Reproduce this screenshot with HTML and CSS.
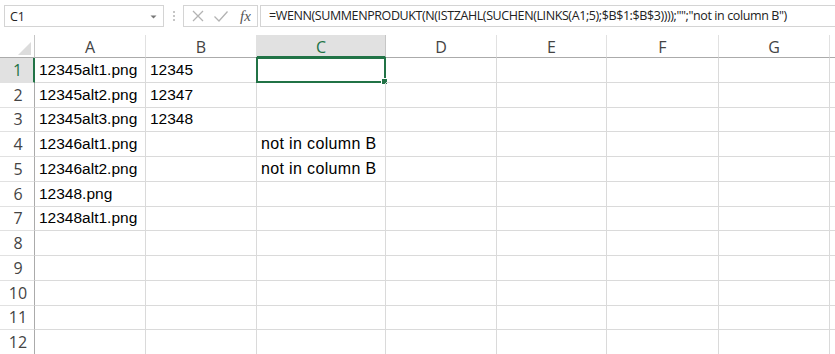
FILE: index.html
```html
<!DOCTYPE html>
<html>
<head>
<meta charset="utf-8">
<link rel="stylesheet" href="styles.css">
</head>
<body>
<div class="app">
  <div class="toolbar">
    <div class="namebox">
      <span class="name">C1</span>
      <svg class="drop" width="7" height="4" viewBox="0 0 7 4"><path d="M0.5 0.5 L6.5 0.5 L3.5 3.5 Z" fill="#777"/></svg>
    </div>
    <div class="grip"><span></span><span></span><span></span></div>
    <div class="fxbox">
      <svg width="14" height="14" viewBox="0 0 14 14"><path d="M2 2 L12 12 M12 2 L2 12" stroke="#b3b3b3" stroke-width="1.3" fill="none"/></svg>
      <svg width="16" height="14" viewBox="0 0 16 14"><path d="M1.5 7.5 L6 12 L14.5 2.5" stroke="#b3b3b3" stroke-width="1.3" fill="none"/></svg>
      <span class="fx">fx</span>
    </div>
    <div class="formula">=WENN(SUMMENPRODUKT(N(ISTZAHL(SUCHEN(LINKS(A1;5);$B$1:$B$3))));"";"not in column B")</div>
  </div>
  <div class="sheet">
    <div class="corner"><svg width="35" height="23" viewBox="0 0 35 23"><path d="M31 7 L31 20 L18 20 Z" fill="#dcdcdc"/></svg></div>
    <div class="ch">A</div>
    <div class="ch">B</div>
    <div class="ch sel">C</div>
    <div class="ch">D</div>
    <div class="ch">E</div>
    <div class="ch">F</div>
    <div class="ch">G</div>
    <div class="ch last"></div>

    <div class="rh sel">1</div><div class="c">12345alt1.png</div><div class="c">12345</div><div class="c active"><span class="handle"></span></div><div class="c"></div><div class="c"></div><div class="c"></div><div class="c"></div><div class="c last"></div>
    <div class="rh">2</div><div class="c">12345alt2.png</div><div class="c">12347</div><div class="c"></div><div class="c"></div><div class="c"></div><div class="c"></div><div class="c"></div><div class="c last"></div>
    <div class="rh">3</div><div class="c">12345alt3.png</div><div class="c">12348</div><div class="c"></div><div class="c"></div><div class="c"></div><div class="c"></div><div class="c"></div><div class="c last"></div>
    <div class="rh">4</div><div class="c">12346alt1.png</div><div class="c"></div><div class="c wide">not in column B</div><div class="c"></div><div class="c"></div><div class="c"></div><div class="c"></div><div class="c last"></div>
    <div class="rh">5</div><div class="c">12346alt2.png</div><div class="c"></div><div class="c wide">not in column B</div><div class="c"></div><div class="c"></div><div class="c"></div><div class="c"></div><div class="c last"></div>
    <div class="rh">6</div><div class="c">12348.png</div><div class="c"></div><div class="c"></div><div class="c"></div><div class="c"></div><div class="c"></div><div class="c"></div><div class="c last"></div>
    <div class="rh">7</div><div class="c">12348alt1.png</div><div class="c"></div><div class="c"></div><div class="c"></div><div class="c"></div><div class="c"></div><div class="c"></div><div class="c last"></div>
    <div class="rh">8</div><div class="c"></div><div class="c"></div><div class="c"></div><div class="c"></div><div class="c"></div><div class="c"></div><div class="c"></div><div class="c last"></div>
    <div class="rh">9</div><div class="c"></div><div class="c"></div><div class="c"></div><div class="c"></div><div class="c"></div><div class="c"></div><div class="c"></div><div class="c last"></div>
    <div class="rh">10</div><div class="c"></div><div class="c"></div><div class="c"></div><div class="c"></div><div class="c"></div><div class="c"></div><div class="c"></div><div class="c last"></div>
    <div class="rh">11</div><div class="c"></div><div class="c"></div><div class="c"></div><div class="c"></div><div class="c"></div><div class="c"></div><div class="c"></div><div class="c last"></div>
    <div class="rh">12</div><div class="c"></div><div class="c"></div><div class="c"></div><div class="c"></div><div class="c"></div><div class="c"></div><div class="c"></div><div class="c last"></div>
  </div>
</div>
</body>
</html>
```
FILE: styles.css
```css
* { box-sizing: border-box; }
html, body { margin: 0; padding: 0; background: #fff; overflow: hidden; }
.app { width: 835px; height: 354px; overflow: hidden; }

.toolbar {
  display: flex;
  align-items: center;
  height: 35px;
  padding: 5px 0 8px 4px;
  font-family: "Open Sans", sans-serif;
}
.namebox {
  width: 160px;
  height: 22px;
  border: 1px solid #d4d4d4;
  display: flex;
  align-items: center;
  justify-content: space-between;
  padding: 0 6px 0 5px;
  font-size: 12.5px;
  color: #222;
}
.drop { margin-top: 1px; }
.grip {
  width: 19px;
  display: flex;
  flex-direction: column;
  align-items: center;
  gap: 2px;
}
.grip span { width: 2px; height: 2px; background: #c6c6c6; }
.fxbox {
  width: 75px;
  height: 22px;
  border: 1px solid #d4d4d4;
  display: flex;
  align-items: center;
  gap: 8px;
  padding-left: 7px;
}
.fx {
  font-family: "Liberation Serif", serif;
  font-style: italic;
  font-size: 15px;
  color: #555;
  margin-left: 3px;
}
.formula {
  flex: 1;
  margin-left: 2px;
  height: 22px;
  border: 1px solid #d4d4d4;
  border-right: none;
  padding-left: 8px;
  font-size: 12.5px;
  letter-spacing: -0.4px;
  line-height: 20px;
  color: #222;
  white-space: nowrap;
  overflow: hidden;
}

.sheet {
  display: grid;
  grid-template-columns: 35px 111px 111px 129px 111px 110px 112px 111px 20px;
  grid-template-rows: 23px repeat(12, 24.75px);
}
.corner {
  border-right: 1px solid #c6c6c6;
  border-bottom: 1px solid #ababab;
  background: #fff;
}
.corner svg { display: block; }
.ch {
  font-family: "Open Sans", sans-serif;
  font-size: 16px;
  color: #444;
  display: flex;
  align-items: center;
  justify-content: center;
  border-right: 1px solid #e1e1e1;
  border-bottom: 1px solid #ababab;
  padding-top: 1px;
}
.ch.sel {
  background: #e1e1e1;
  color: #217346;
  border-bottom: 2px solid #217346;
  border-right-color: #c6c6c6;
  padding-top: 2px;
}
.rh {
  font-family: "Open Sans", sans-serif;
  font-size: 16px;
  color: #444;
  display: flex;
  align-items: center;
  justify-content: center;
  border-right: 1px solid #ababab;
  border-bottom: 1px solid #e1e1e1;
  padding-left: 2px;
}
.rh.sel {
  background: #e1e1e1;
  color: #217346;
  border-right: 2px solid #217346;
}
.c {
  position: relative;
  font-family: "Liberation Sans", sans-serif;
  font-size: 15.5px;
  color: #000;
  border-right: 1px solid #dadada;
  border-bottom: 1px solid #dadada;
  display: flex;
  align-items: flex-end;
  padding: 0 0 3px 4px;
  white-space: nowrap;
}
.c.wide { font-size: 16px; letter-spacing: 0.35px; }
.c.last, .ch.last { border-right: none; }
.c.active {
  border: 2px solid #217346;
  margin: -1px 0 0 -1px;
}
.handle {
  position: absolute;
  right: -4px;
  bottom: -4px;
  width: 5px;
  height: 5px;
  background: #217346;
  border: 1px solid #fff;
  box-sizing: content-box;
}
```
